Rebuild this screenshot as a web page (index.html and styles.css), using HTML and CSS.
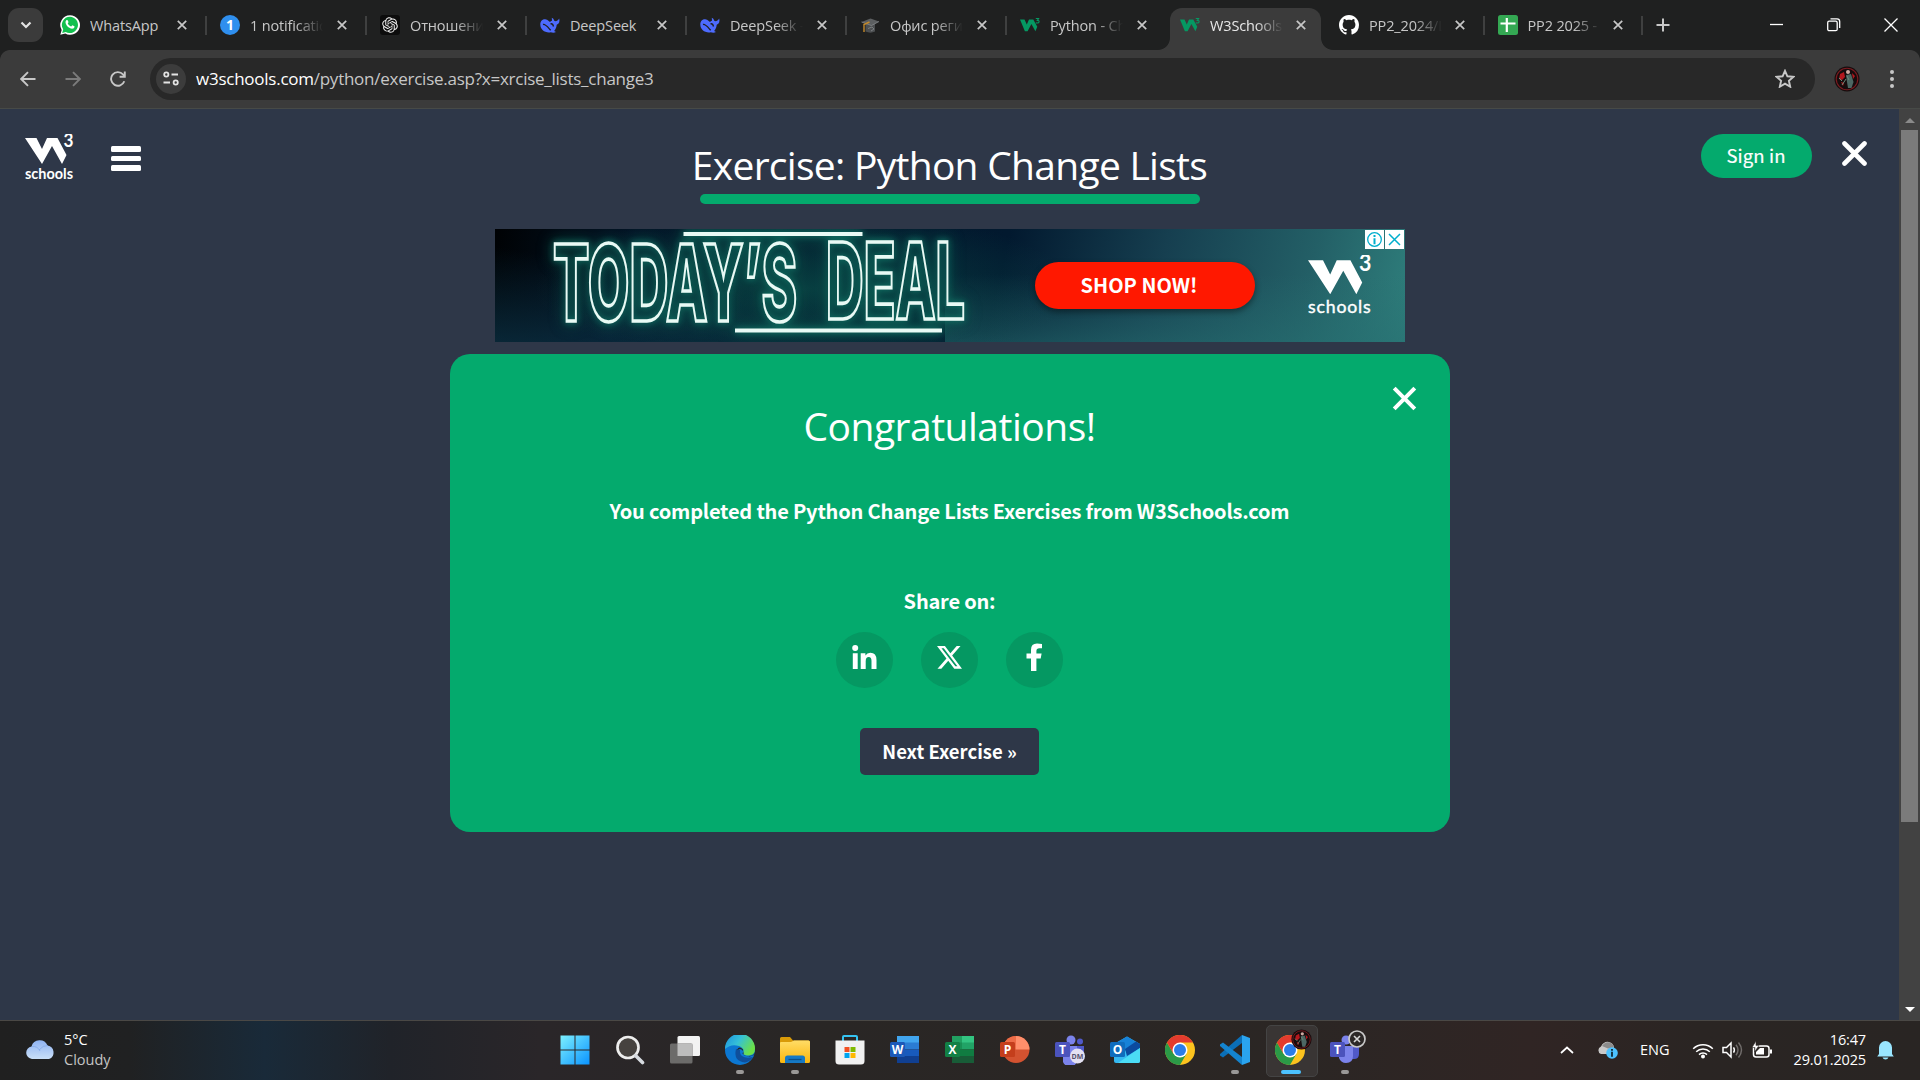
FILE: index.html
```html
<!DOCTYPE html>
<html lang="en">
<head>
<meta charset="utf-8">
<title>W3Schools Python Exercise</title>
<link rel="stylesheet" href="styles.css">
</head>
<body>
<svg class="defs" width="0" height="0">
  <defs>
    <symbol id="close" viewBox="0 0 10 10"><path d="M.8.8l8.4 8.4M9.2.8L.8 9.2" fill="none" stroke="currentColor" stroke-width="1.7"/></symbol>
    <symbol id="w3" viewBox="0 0 48 30"><path d="M0 4h11.500l5.500 11 5-11h10.500l9 17-4.500 9-10-18-10 18z" fill="currentColor"/></symbol>
    <symbol id="w3tab" viewBox="0 0 20 20"><path d="M0 4.500h4.500l2.300 5L9 4.500h4.300l4 7.300-1.900 4.400-4-7.200-3.800 7.200H4.900z" fill="#059862"/><path d="M15.800 3.500h2.800l-1.300 1.900q1.900 0 1.800 1.500-.3 1.500-3.300 1" fill="none" stroke="#059862" stroke-width="1.100"/></symbol>
    <symbol id="whale" viewBox="0 0 20 20"><path d="M.3 9.500C.3 5.600 3.300 3.700 6 4.400c1.500.3 2.700 1.200 4 2.600.7-.8 1.400-1.200 2-1.200l-.2-3c1.200.3 2 1.600 2.500 3 1.500.9 3.300.2 4.900-2.300.7 2.800.1 5.500-2.500 6.300-.2 2.700-1.200 4.700-2.600 6.100l1.900 1.100c-1.700.9-3.500.8-5.200.3C5.200 18.400.3 14.600.3 9.500z" fill="#4d6bfe"/><path d="M3 9.500c2.500-.7 5.500 3.500 7.700 5.800M10.500 8.800q2.300-.5 3 2.700" fill="none" stroke="#1f2020" stroke-width="1.300"/></symbol>
    <symbol id="chrome" viewBox="0 0 30 30"><circle cx="15" cy="15" r="15" fill="#fcc31e"/><path d="M15 15L8.500 18.800 2 7.500A15 15 0 0 0 15 30l6.500-11.300z" fill="#2b9a47"/><path d="M2 7.500A15 15 0 0 1 28 7.500H15L8.500 18.700z" fill="#e33b2e"/><circle cx="15" cy="15" r="7.500" fill="#fff"/><circle cx="15" cy="15" r="6" fill="#2b7de9"/></symbol>
    <symbol id="avatar" viewBox="0 0 26 26"><circle cx="13" cy="13" r="12.500" fill="#160c0d"/><circle cx="13" cy="13" r="10.800" fill="none" stroke="#7a1b20" stroke-width="1.100"/><path d="M6 8l4-2 1 5-3 3-3-1zM18 7l3 3-2 3zM7 16l3 1-1 3z" fill="#b5181e"/><path d="M12 9l5-1 2.500 8-2 6h-3.500l-1-6z" fill="#4d6763"/><circle cx="14" cy="6" r="2" fill="#d0aaa2"/><path d="M5 12l3 3M8 19l4-6M13 10l2 4" stroke="#6d8a7a"/></symbol>
    <linearGradient id="gWin" x1="0" y1="0" x2="1" y2="1"><stop offset="0" stop-color="#7df0ff"/><stop offset="1" stop-color="#0a93ff"/></linearGradient>
    <linearGradient id="gEdge" x1="0" y1="0" x2="1" y2=".5"><stop offset="0" stop-color="#1b8fe0"/><stop offset=".5" stop-color="#35c1d8"/><stop offset="1" stop-color="#6be048"/></linearGradient>
    <linearGradient id="gFold" x1="0" y1="0" x2="0" y2="1"><stop offset="0" stop-color="#ffdc66"/><stop offset="1" stop-color="#fbb60d"/></linearGradient>
    <linearGradient id="gCloud" x1="0" y1="0" x2="0" y2="1"><stop offset="0" stop-color="#8fb3f2"/><stop offset="1" stop-color="#c9dff8"/></linearGradient>
  </defs>
</svg>

<div class="screen">
  <header class="tabstrip">
    <button class="tab-search"><svg width="12" height="8" viewBox="0 0 12 8"><path d="M1.500 1.500L6 6l4.500-4.500" fill="none" stroke="#e3e3e3" stroke-width="2.200"/></svg></button>
    <div class="tab"><svg class="fav" viewBox="0 0 20 20"><path d="M10 .2a9.700 9.700 0 0 0-8.300 14.700L.3 19.800l5-1.300A9.800 9.800 0 1 0 10 .2z" fill="#fff"/><path d="M10 1.800a8.100 8.100 0 0 0-6.800 12.500l-1 3.600 3.600-1A8.100 8.100 0 1 0 10 1.800z" fill="#12c04e"/><path d="M6.300 5.300c.6-.6 1.300-.5 1.500.1l.7 1.700c.1.600-.8 1-.7 1.400.6 1.300 1.900 2.400 3.300 2.900.5.100.9-1 1.300-1.100l2 1c.5.700-.3 2-1.300 2.300-2 .5-4.700-1-6.200-2.900C5.700 9.100 4.800 7 6.300 5.300z" fill="#fff"/></svg><span class="tab-text">WhatsApp</span><svg class="x"><use href="#close"/></svg></div>
    <div class="tab"><span class="fav badge">1</span><span class="tab-text">1 notification</span><svg class="x"><use href="#close"/></svg></div>
    <div class="tab"><svg class="fav" viewBox="0 0 20 20"><rect width="20" height="20" rx="3" fill="#0c0c0c"/><g transform="translate(2.200 2.200) scale(.65)" fill="#f0f0f0"><path d="M22.280 9.820a5.980 5.980 0 0 0-.51-4.910 6.050 6.050 0 0 0-6.510-2.900A6.070 6.070 0 0 0 4.980 4.180a5.980 5.980 0 0 0-4 2.900 6.050 6.050 0 0 0 .74 7.100 5.980 5.980 0 0 0 .51 4.910 6.050 6.050 0 0 0 6.510 2.900A5.980 5.980 0 0 0 13.260 24a6.060 6.060 0 0 0 5.770-4.210 5.990 5.990 0 0 0 4-2.900 6.060 6.060 0 0 0-.75-7.070zm-9.020 12.610a4.480 4.480 0 0 1-2.880-1.040l.14-.08 4.780-2.760a.79.79 0 0 0 .39-.68v-6.740l2.020 1.170a.07.07 0 0 1 .04.05v5.580a4.500 4.500 0 0 1-4.490 4.500zM3.600 18.300a4.470 4.470 0 0 1-.53-3.010l.14.080 4.780 2.760a.77.77 0 0 0 .78 0l5.840-3.370v2.330a.08.08 0 0 1-.03.06L9.740 19.950a4.500 4.500 0 0 1-6.140-1.650zM2.340 7.900a4.480 4.480 0 0 1 2.370-1.970v5.670a.77.77 0 0 0 .39.680l5.810 3.350-2.020 1.170a.08.08 0 0 1-.07 0l-4.830-2.790A4.500 4.500 0 0 1 2.340 7.900zm16.600 3.860L13.100 8.360 15.120 7.200a.08.08 0 0 1 .07 0l4.830 2.790a4.490 4.490 0 0 1-.68 8.100v-5.680a.79.79 0 0 0-.4-.65zm2.010-3.020l-.14-.09-4.770-2.780a.78.780 0 0 0-.79 0L9.410 9.230V6.900a.07.07 0 0 1 .03-.06l4.830-2.790a4.500 4.500 0 0 1 6.680 4.690zM8.310 12.860l-2.020-1.160a.08.08 0 0 1-.04-.06V6.070a4.500 4.500 0 0 1 7.380-3.450l-.14.08L8.700 5.460a.79.79 0 0 0-.39.680zm1.100-2.370l2.600-1.500 2.610 1.500v3l-2.600 1.500-2.610-1.500z"/></g></svg><span class="tab-text">Отношения</span><svg class="x"><use href="#close"/></svg></div>
    <div class="tab"><svg class="fav"><use href="#whale"/></svg><span class="tab-text">DeepSeek</span><svg class="x"><use href="#close"/></svg></div>
    <div class="tab"><svg class="fav"><use href="#whale"/></svg><span class="tab-text">DeepSeek -</span><svg class="x"><use href="#close"/></svg></div>
    <div class="tab"><svg class="fav" viewBox="0 0 20 20"><path d="M5.500 9v7.500q5 2.300 9.500 0V9z" fill="#4c4f51"/><path d="M1.500 7L10.500 3.500 19 6.500 11.500 10.500z" fill="#5c5f61"/><path d="M1.500 7l10 3.500 7.500-4M8 13.500l4-1.500 2 2-3 2" stroke="#85898b" stroke-width=".8" fill="none"/><path d="M9.500 7L4 9.500v7.500" stroke="#c48a2b" stroke-width="1.400" fill="none"/></svg><span class="tab-text">Офис регис</span><svg class="x"><use href="#close"/></svg></div>
    <div class="tab last"><svg class="fav"><use href="#w3tab"/></svg><span class="tab-text">Python - Ch</span><svg class="x"><use href="#close"/></svg></div>
    <div class="tab active"><svg class="fav"><use href="#w3tab"/></svg><span class="tab-text">W3Schools</span><svg class="x"><use href="#close"/></svg></div>
    <div class="tab short"><svg class="fav" viewBox="0 0 16 16"><path fill="#fff" d="M8 0C3.580 0 0 3.580 0 8c0 3.540 2.290 6.530 5.470 7.590.4.070.55-.17.55-.38 0-.19-.01-.82-.01-1.490-2.010.37-2.530-.49-2.690-.94-.09-.23-.48-.94-.82-1.130-.28-.15-.68-.52-.01-.53.63-.01 1.080.58 1.230.82.72 1.210 1.870.87 2.330.66.070-.52.280-.87.510-1.070-1.780-.2-3.640-.89-3.640-3.950 0-.87.310-1.590.82-2.150-.08-.2-.36-1.020.08-2.120 0 0 .67-.21 2.200.82.640-.18 1.320-.27 2-.27s1.360.09 2 .27c1.530-1.040 2.200-.82 2.200-.82.440 1.100.160 1.920.080 2.120.510.560.820 1.270.820 2.150 0 3.070-1.870 3.750-3.650 3.950.290.250.540.730.540 1.480 0 1.070-.01 1.930-.01 2.200 0 .210.150.460.550.380A8.010 8.010 0 0 0 16 8c0-4.420-3.580-8-8-8z"/></svg><span class="tab-text">PP2_2024/L</span><svg class="x"><use href="#close"/></svg></div>
    <div class="tab short"><svg class="fav" viewBox="0 0 20 20"><rect width="20" height="20" rx="2.500" fill="#34a853"/><path d="M2.500 8.500h15M8.800 3v14" stroke="#fff" stroke-width="2.200"/></svg><span class="tab-text">PP2 2025 - G</span><svg class="x"><use href="#close"/></svg></div>
    <svg class="newtab" viewBox="0 0 14 14"><path d="M7 .5v13M.5 7h13" stroke="#c7c7c7" stroke-width="2"/></svg>
    <div class="winctl">
      <svg width="14" height="14"><path d="M0 6.500h13" stroke="#fff" stroke-width="1.300"/></svg>
      <svg width="14" height="14"><rect x=".7" y="3.200" width="9.500" height="9.500" rx="1.500" fill="none" stroke="#fff" stroke-width="1.300"/><path d="M3.500.8h6.500q2.700 0 2.700 2.700v6.500" fill="none" stroke="#fff" stroke-width="1.300"/></svg>
      <svg width="14" height="14"><path d="M.5.5l13 13M13.500.5l-13 13" stroke="#fff" stroke-width="1.300"/></svg>
    </div>
  </header>

  <div class="toolbar">
    <svg class="nav" viewBox="0 0 16 16"><path d="M15.500 8H1.500M8 1.200L1.200 8 8 14.800" fill="none" stroke="#c7c7c7" stroke-width="1.900"/></svg>
    <svg class="nav" viewBox="0 0 16 16"><path d="M.5 8h14M8 1.200L14.800 8 8 14.800" fill="none" stroke="#7b7b7b" stroke-width="1.900"/></svg>
    <svg class="nav" viewBox="0 0 16 16"><path d="M14.300 10.200A6.800 6.800 0 1 1 13 3.400L14.500 5M14.800.5v5.200H9.600" fill="none" stroke="#c7c7c7" stroke-width="1.900"/></svg>
    <div class="omnibox">
      <span class="site"><svg width="16" height="15" viewBox="0 0 16 15"><g fill="none" stroke="#e3e3e3" stroke-width="1.800"><circle cx="3.300" cy="3.500" r="2.100"/><path d="M8.500 3.500h6.500M.5 11.500h6.500"/><circle cx="12.700" cy="11.500" r="2.100"/></g></svg></span>
      <span class="url"><b>w3schools.com</b>/python/exercise.asp?x=xrcise_lists_change3</span>
      <svg class="star" viewBox="0 0 20 19"><path d="M10 1.800l2.400 5.500 6 .5-4.500 4 1.300 5.900L10 14.600l-5.200 3.100 1.300-5.900-4.500-4 6-.5z" fill="none" stroke="#c7c7c7" stroke-width="1.900"/></svg>
    </div>
    <svg class="profile"><use href="#avatar"/></svg>
    <svg class="dots" viewBox="0 0 4 18"><g fill="#c7c7c7"><circle cx="2" cy="2" r="2"/><circle cx="2" cy="9" r="2"/><circle cx="2" cy="16" r="2"/></g></svg>
  </div>

  <div class="viewport">
    <main class="page">
      <div class="topbar">
        <div class="left">
          <svg class="logo" width="49" height="50" viewBox="0 0 49 50"><use href="#w3" width="48" height="30"/><text x="38.500" y="13" font-size="18" font-weight="700" textLength="10" lengthAdjust="spacingAndGlyphs">3</text><text x="0" y="44.500" font-size="14.500" font-weight="700" textLength="48" lengthAdjust="spacingAndGlyphs">schools</text></svg>
          <div class="burger"><i></i><i></i><i></i></div>
        </div>
        <div class="heading"><h1>Exercise: Python Change Lists</h1><div class="progress"></div></div>
        <div class="right"><button class="signin">Sign in</button><svg class="exit" width="25" height="25" viewBox="0 0 25 25"><path d="M2.500 2.500l20 20M22.500 2.500l-20 20" stroke="#fff" stroke-width="4.600" stroke-linecap="round"/></svg></div>
      </div>

      <div class="ad">
        <svg width="910" height="113" viewBox="0 0 910 113">
          <g class="neon"><path d="M188.500 5h179M240 101.500h207" stroke-width="3.800"/>
          <text x="58" y="92" textLength="244" lengthAdjust="spacingAndGlyphs">TODAY’S</text>
          <text x="331" y="90" textLength="139" lengthAdjust="spacingAndGlyphs">DEAL</text></g>
        </svg>
        <div class="shop">SHOP NOW!</div>
        <svg class="adlogo" width="64" height="64" viewBox="0 0 49 49"><use href="#w3" width="48" height="30"/><text x="39" y="12.500" font-size="17.500" font-weight="700" textLength="9.500" lengthAdjust="spacingAndGlyphs">3</text><text x="0" y="44.300" font-size="13.500" font-weight="400" stroke="#fff" stroke-width=".3" textLength="48">schools</text></svg>
        <div class="adchoice">
          <svg width="19" height="19"><rect width="19" height="19" fill="#fff"/><circle cx="9.500" cy="9.500" r="6.800" fill="none" stroke="#00aecd" stroke-width="1.300"/><path d="M9.500 5v2M9.500 8.200v6" stroke="#00aecd" stroke-width="2"/></svg>
          <svg width="19" height="19"><rect width="19" height="19" fill="#fff"/><path d="M4 4l11 11M15 4L4 15" stroke="#00aecd" stroke-width="1.500"/></svg>
        </div>
      </div>

      <section class="card">
        <svg class="card-x" width="25" height="25" viewBox="0 0 25 25"><path d="M2.200 2.200l20.600 20.600M22.800 2.200L2.200 22.800" stroke="#fff" stroke-width="4"/></svg>
        <h2>Congratulations!</h2>
        <p class="done">You completed the Python Change Lists Exercises from W3Schools.com</p>
        <p class="share">Share on:</p>
        <div class="social">
          <span><svg width="25" height="25" viewBox="0 0 25 25" fill="#fff"><circle cx="3.200" cy="3.100" r="3"/><path d="M.8 8.200h4.900V24H.8zM8.700 8.200h4.700v2.200q1.700-2.600 4.900-2.600 6.200 0 6.200 7.200v9h-5v-7.900q0-4-2.700-4-3.100 0-3.100 4.200V24h-5z"/></svg></span>
          <span><svg width="25" height="23" viewBox="0 0 24 22" ><path fill="#fff" d="M18.900 0h3.680l-8.040 9.190L24 21.700h-7.410l-5.800-7.580L4.150 21.700H.47l8.600-9.830L0 0h7.590l5.250 6.930zM17.600 19.500h2.040L6.490 2.090H4.300z"/></svg></span>
          <span><svg width="17" height="28" viewBox="0 0 17 28"><path fill="#fff" d="M5 28V15.500H.5v-5H5V6.800Q5 .5 11 .5q2.700 0 5 .4v4.300h-2.700q-2.900 0-2.900 2.800v2.500h5.200l-.9 5h-4.300V28z"/></svg></span>
        </div>
        <button class="next">Next Exercise »</button>
      </section>
    </main>
    <div class="scrollbar"><i class="up"></i><i class="thumb"></i><i class="down"></i></div>
  </div>

  <footer class="taskbar">
    <div class="weather">
      <svg width="31" height="21" viewBox="0 0 31 21"><path d="M7 20a6.300 6.300 0 0 1-.5-12.500A8.500 8.500 0 0 1 22.500 6.500 7 7 0 0 1 24 20z" fill="url(#gCloud)"/><path d="M15 12a8 8 0 0 0-8-4.500M14 11q4-5 9-4.500" stroke="#7fa5e8" fill="none" opacity=".7"/></svg>
      <div><div>5°C</div><div class="dim">Cloudy</div></div>
    </div>
    <div class="apps">
      <span><svg viewBox="0 0 30 30"><path d="M.5.500h14v14H.5zM15.500.500h14v14h-14zM.5 15.500h14v14H.5zM15.500 15.500h14v14h-14z" fill="url(#gWin)"/></svg></span>
      <span><svg viewBox="0 0 30 30"><circle cx="13" cy="12.500" r="10.500" fill="#46423f" stroke="#ededed" stroke-width="2.700"/><path d="M20.500 20.500l7 7" stroke="#d7dbe0" stroke-width="3.600" stroke-linecap="round"/></svg></span>
      <span><svg viewBox="0 0 30 30"><rect x="7.500" y="1" width="22.500" height="20" rx="1.500" fill="#f3f3f3"/><rect x="0" y="8.500" width="22.500" height="20" rx="1.500" fill="#6c6b6a"/><path d="M7.500 8.500h15V21h-15z" fill="#bdbdbd"/></svg></span>
      <span class="run"><svg viewBox="0 0 30 30"><circle cx="15" cy="15" r="15" fill="#0c77d2"/><path d="M0 13.500A15 15 0 0 1 30 14q0 6.500-7 6.500-5.500 0-4.500-3 1-4.500-4.500-6.500Q6 8.500 0 14z" fill="url(#gEdge)"/><path d="M11 14q-3 12 9 13.500 5-1 8-5.500-7 2-11-1-2.500-2-2-6z" fill="#0f4f9c"/><path d="M12 15q2-4.500 6-.5.500 2-.5 4 2 3 7 3l5-1.500V17l-1 3q-3 1.500-7 1-3.500-.5-3-2.500 0-4-3.500-4.500z" fill="#252424"/></svg></span>
      <span class="run"><svg viewBox="0 0 30 30"><path d="M0 3.500Q0 2 1.500 2H10l3 3.500h15.500Q30 5.500 30 7v5H0z" fill="#d99a08"/><path d="M0 8q0-1 1-1h10l3-1.500h14.500Q30 5.500 30 7v19.500Q30 28 28.500 28h-27Q0 28 0 26.500z" fill="url(#gFold)"/><path d="M5 28v-5q0-2.500 2.500-2.500h15Q25 20.500 25 23v5z" fill="#1679c5"/><path d="M8.500 24.500h13" stroke="#0c4f8a" stroke-width="1.300"/></svg></span>
      <span><svg viewBox="0 0 30 30"><path d="M8 7V2q0-1 1-1h12q1 0 1 1v5" fill="none" stroke="#35c3f2" stroke-width="2"/><path d="M.5 5.500h29V26q0 3.500-3.500 3.500H4Q.5 29.500.5 26z" fill="#f1f1f1"/><path d="M9.500 12h5v5h-5z" fill="#f25022"/><path d="M15.500 12h5v5h-5z" fill="#7fba00"/><path d="M9.500 18h5v5h-5z" fill="#00a4ef"/><path d="M15.500 18h5v5h-5z" fill="#ffb900"/></svg></span>
      <span><svg viewBox="0 0 30 30"><path d="M7 1h22v7H7z" fill="#41a5ee"/><path d="M7 7.500h22v7H7z" fill="#2b7cd3"/><path d="M7 14.500h22v7H7z" fill="#185abd"/><path d="M7 21h22v7H7z" fill="#103f91"/><rect y="7" width="15" height="15" rx="1.500" fill="#1c59b8"/><text x="7.500" y="18.500">W</text></svg></span>
      <span><svg viewBox="0 0 30 30"><path d="M7 1h22v7H7z" fill="#33c481"/><path d="M7 7.500h22v7H7z" fill="#21a366"/><path d="M7 14.500h22v7H7z" fill="#107c41"/><path d="M7 21h22v7H7z" fill="#185c37"/><path d="M7 1h10v20H7z" fill="#107c41" opacity=".5"/><rect y="7" width="15" height="15" rx="1.500" fill="#128045"/><text x="7.500" y="18.500">X</text></svg></span>
      <span><svg viewBox="0 0 30 30"><circle cx="16" cy="14.500" r="13.500" fill="#d35230"/><path d="M16 14.500V1a13.500 13.500 0 0 1 13.500 13.500z" fill="#ff8f6b"/><path d="M16 1A13.500 13.500 0 0 0 2.500 14.500H16z" fill="#ed6c47"/><rect y="7" width="15" height="15" rx="1.500" fill="#c43e1c"/><text x="7.500" y="18.500">P</text></svg></span>
      <span><svg viewBox="0 0 30 30"><circle cx="16" cy="5" r="4.500" fill="#7b83eb"/><circle cx="25" cy="6.500" r="3" fill="#5059c9"/><path d="M20 11h9v11h-9z" fill="#5059c9"/><path d="M8 11h14v10a7 7 0 0 1-14 6z" fill="#7b83eb"/><rect y="7" width="15" height="15" rx="1.500" fill="#4b53bc"/><text x="7.500" y="18.500">T</text><circle cx="22.500" cy="21" r="7.500" fill="#e4e1f2"/><text class="dm" x="22.500" y="23.500">DM</text></svg></span>
      <span><svg viewBox="0 0 30 30"><path d="M4 9L17 1.500 30 9v17q0 2-2 2H6q-2 0-2-2z" fill="#35b8f1"/><path d="M4 9L17 1.500 27 7.500 12 18H4z" fill="#1782d8"/><path d="M15 14l11-7.500L30 9v4L17 21z" fill="#0b4a9f"/><path d="M30 13v13q0 2-2 2H8z" fill="#4bdcf5"/><rect y="7" width="15" height="15" rx="1.500" fill="#0f6cbd"/><text x="7.500" y="18.500">O</text></svg></span>
      <span><svg><use href="#chrome"/></svg></span>
      <span class="run"><svg viewBox="0 0 30 30"><path d="M22 0v8L3 22.500 0 20.500v-1.500z" fill="#0b6fb8"/><path d="M0 9.500L3 7.500 22 22v8L0 11z" fill="#1484cf"/><path d="M22 0l8 3v24l-8 3z" fill="#2aa4ef"/></svg></span>
      <span class="run on"><svg viewBox="0 0 30 30"><use href="#chrome"/></svg><svg class="mini"><use href="#avatar"/></svg></span>
      <span class="run"><svg viewBox="0 0 30 30"><circle cx="16" cy="5" r="4.500" fill="#7b83eb"/><path d="M20 11h9v8q0 5-5 5h-4z" fill="#5059c9"/><path d="M9 11h14v10q0 7-7 7-5 0-7-5z" fill="#7b83eb"/><rect y="7" width="15" height="15" rx="1.500" fill="#4b53bc"/><text x="7.500" y="18.500">T</text></svg><svg class="status" viewBox="0 0 18 18"><circle cx="9" cy="9" r="8" fill="#2c2827" stroke="#c9c9c9" stroke-width="1.700"/><path d="M6 6l6 6M12 6l-6 6" stroke="#d8d8d8" stroke-width="1.600"/></svg></span>
    </div>
    <div class="tray">
      <svg class="chev" width="14" height="8"><path d="M1 7l6-5.500L13 7" fill="none" stroke="#fff" stroke-width="1.700"/></svg>
      <svg class="onedrive" width="21" height="18"><path d="M4 13A4 4 0 0 1 4 5.500Q7 0 12 1q4 1 5 5v7z" fill="#c9c9c9"/><path d="M5 5Q8 0 13 1.500q3 1.500 4 5l-6 1z" fill="#8b8b8b"/><circle cx="15" cy="12" r="5.800" fill="#4cc2ff"/><path d="M15 8v1.800M15 10.800v5" stroke="#12303f" stroke-width="1.900"/></svg>
      <span class="lang">ENG</span>
      <svg class="wifi" width="22" height="17" viewBox="0 0 22 17"><g fill="none" stroke="#fff" stroke-width="1.500"><path d="M1.200 6.800a14 14 0 0 1 19.600 0M4.200 9.800a9.700 9.700 0 0 1 13.600 0M7 12.600a5.700 5.700 0 0 1 8 0"/></g><circle cx="11" cy="14.500" r="2" fill="#fff"/></svg>
      <svg class="sound" width="21" height="18" viewBox="0 0 21 18"><path d="M1 6.500h3.500L9 2v14l-4.500-4.500H1z" fill="none" stroke="#fff" stroke-width="1.500"/><path d="M11.500 6.300q1.800 2.700 0 5.400" fill="none" stroke="#fff" stroke-width="1.400"/><path d="M14 3.800q4 5.200 0 10.400M16.500 1.500q6 7.500 0 15" fill="none" stroke="#716d6b" stroke-width="1.400"/></svg>
      <svg class="batt" width="21" height="18" viewBox="0 0 21 18"><rect x="1.500" y="5" width="15.500" height="11" rx="2.500" fill="none" stroke="#fff" stroke-width="1.500"/><path d="M18 8.500v4h2v-4zM4 11l4-4h4v6.500H4z" fill="#fff"/><path d="M4 0L0 6.500h3L2.500 11 7 4.500H4z" fill="#fff" stroke="#2b2625" stroke-width=".6"/></svg>
      <div class="clock"><div>16:47</div><div>29.01.2025</div></div>
      <svg class="bell" width="17" height="20" viewBox="0 0 17 20"><path d="M2 14V7.500a6.500 6.500 0 0 1 13 0V14l1.800 2.500H.2zM5.500 17.500h6q-.8 2-3 2t-3-2z" fill="#9ae6ff"/></svg>
    </div>
  </footer>
</div>
</body>
</html>
```
FILE: styles.css
```css
* { box-sizing: border-box; }
body { margin: 0; background: #2e3748; font-family: "Open Sans", "Noto Sans", sans-serif; color: #fff; }
button { border: 0; padding: 0; color: inherit; font: inherit; }
h1, h2, p { margin: 0; font-weight: 400; }
svg { display: block; flex: none; }
.defs { position: absolute; }
.screen { width: 1920px; height: 1080px; display: flex; flex-direction: column; overflow: hidden; }

/* Tab strip */
.tabstrip { height: 50px; flex: none; display: flex; background: #1f2020; padding-left: 8px; }
.tab-search { width: 35px; height: 34px; margin: 8px 4px 0 0; border-radius: 11px; background: #3b3b3b; display: grid; place-items: center; }
.tab { width: 160px; height: 50px; padding: 0 20px 0 13px; display: flex; align-items: center; position: relative; }
.tab.short { width: 158.500px; }
.tab::after { content: ""; position: absolute; right: 0; top: 16px; width: 2px; height: 19px; background: #3f4040; }
.tab.last::after { display: none; }
.tab.active { width: 159px; }
.tab.active::before { content: ""; position: absolute; left: 3px; right: 5px; top: 8px; bottom: 0; border-radius: 12px 12px 0 0; background: #3b3b3b; }
.tab.active > * { position: relative; }
/* outward curves at the foot of the active tab */
.tab.active::after { left: -9px; right: -7px; top: auto; bottom: 0; width: auto; height: 12px; background: radial-gradient(circle at 0 0, transparent 11.500px, #3b3b3b 12.300px) left / 12px 12px no-repeat, radial-gradient(circle at 100% 0, transparent 11.500px, #3b3b3b 12.300px) right / 12px 12px no-repeat; }
.fav { width: 20px; height: 20px; flex: none; margin-right: 10px; }
.badge { border-radius: 50%; background: #2f8fee; font: 700 14px/20px "Noto Sans", sans-serif; text-align: center; }
.tab-text { flex: none; width: 73px; height: 24px; margin-top: 1px; font-size: 14.500px; line-height: 24px; letter-spacing: -.15px; color: #c7c7c7; white-space: nowrap; overflow: hidden; -webkit-mask-image: linear-gradient(90deg, #000 62%, transparent 100%); mask-image: linear-gradient(90deg, #000 62%, transparent 100%); }
.tab:nth-child(2) .tab-text, .tab:nth-child(5) .tab-text { -webkit-mask-image: none; mask-image: none; }
.tab.active .tab-text { color: #e8e8e8; }
.x { width: 10px; height: 10px; margin-left: auto; color: #c7c7c7; }
.newtab { width: 14px; height: 14px; margin: 18px 0 0 13px; }
.winctl { margin: 18px 22px 0 auto; display: flex; gap: 43px; }

/* Toolbar */
.toolbar { height: 59px; flex: none; display: flex; align-items: center; padding: 0 26px 1px 20px; background: radial-gradient(circle at 10px 10px, transparent 9.500px, #1f2020 10.300px) 0 0 / 10px 10px no-repeat, radial-gradient(circle at 0 10px, transparent 9.500px, #1f2020 10.300px) 100% 0 / 10px 10px no-repeat, #3b3b3b; border-bottom: 1px solid #474a47; }
.nav { width: 16px; height: 16px; margin-right: 29px; }
.omnibox { width: 1665px; height: 42px; margin-left: -5px; border-radius: 21px; background: #282828; display: flex; align-items: center; padding: 0 20px 0 6px; }
.site { width: 30px; height: 30px; border-radius: 50%; background: #3c3c3c; display: grid; place-items: center; margin-right: 10px; }
.url { font-size: 17px; line-height: 26px; letter-spacing: -.25px; margin-top: 1px; color: #c7c7c7; white-space: nowrap; }
.url b { font-weight: 400; color: #fff; }
.star { width: 20px; height: 19px; margin-left: auto; }
.profile { width: 26px; height: 26px; margin-left: 19px; }
.dots { width: 4px; height: 18px; margin-left: auto; }

/* Page */
.viewport { flex: 1; display: flex; min-height: 0; }
.page { flex: 1; display: flex; flex-direction: column; align-items: center; }
.topbar { width: 100%; height: 120px; flex: none; display: grid; grid-template-columns: 1fr 1000px 1fr; }
.left { display: flex; padding: 25px 0 0 25px; }
.logo text, .adlogo text { fill: #fff; font-family: Lato, sans-serif; }
.burger { display: flex; flex-direction: column; gap: 4px; margin: 12px 0 0 36.500px; }
.burger i { width: 30px; height: 5.600px; border-radius: 1.500px; background: #fff; }
.heading { display: flex; flex-direction: column; align-items: center; }
h1, h2 { font-size: 39px; line-height: 54px; letter-spacing: -.5px; white-space: nowrap; }
h1 { margin-top: 29px; letter-spacing: -.72px; }
.progress { width: 500px; height: 10px; margin-top: 2px; border-radius: 5px; background: #04aa6d; }
.right { display: flex; justify-content: flex-end; padding: 25px 32.500px 0 0; }
.signin { width: 111px; height: 44px; border-radius: 22px; background: #04aa6d; font: 400 18.500px/42px "Noto Sans CJK SC", sans-serif; letter-spacing: .1px; padding-bottom: 2px; -webkit-text-stroke: .2px #fff; }
.exit { margin: 7px 0 0 30px; }

.ad { position: relative; width: 910px; height: 113px; flex: none; background: radial-gradient(ellipse 270px 80px at 310px 60px, rgba(12,90,80,.6), transparent), linear-gradient(to top, rgba(38,110,112,.55), transparent 60%) 450px 0 / 460px 113px no-repeat, linear-gradient(10deg, rgba(12,52,72,.7), transparent 35%), linear-gradient(104deg, #000204 0%, #031426 15%, #02192f 55%, #163f50 72%, #235f66 88%, #2f7f7c 100%); }
.neon { fill: none; stroke: #e9faf5; filter: drop-shadow(0 0 3px #14806e) drop-shadow(0 0 7px #0b5f53); }
.neon text { font: 800 106px Inter, "Liberation Sans Narrow", sans-serif; stroke-width: 3.700px; }
.shop { position: absolute; left: 540px; top: 33px; width: 220px; height: 47px; border-radius: 24px; background: #ff1800; box-shadow: 0 3px 6px rgba(0,0,0,.4); text-align: center; padding-right: 11px; font: 700 20px/46px "Noto Sans CJK SC", sans-serif; }
.adlogo { position: absolute; left: 813px; top: 26px; }
.adchoice { position: absolute; right: 1px; top: 1px; display: flex; gap: 1px; }

.card { position: relative; width: 1000px; height: 478px; flex: none; margin-top: 12px; border-radius: 20px; background: #04aa6d; display: flex; flex-direction: column; align-items: center; font-family: "Noto Sans CJK SC", sans-serif; font-weight: 700; }
.card-x { position: absolute; right: 33px; top: 31.500px; }
h2 { margin-top: 45px; font-family: "Open Sans", sans-serif; }
.done { font-weight: 700; font-size: 20px; line-height: 30px; letter-spacing: -.2px; margin-top: 43px; white-space: nowrap; }
.share { font-weight: 700; font-size: 20px; line-height: 30px; letter-spacing: -.2px; margin-top: 60px; }
.social { display: flex; gap: 28px; margin-top: 16px; }
.social span { width: 57px; height: 56px; border-radius: 50%; background: #059862; display: grid; place-items: center; padding-bottom: 6px; }
.next { width: 179px; height: 47px; margin-top: 40px; border-radius: 5px; background: #2e3748; font-size: 18.500px; line-height: 45px; white-space: nowrap; }

.scrollbar { width: 21px; background: #424242; display: flex; flex-direction: column; align-items: center; }
.up { margin-top: 9px; border: 5px solid transparent; border-top: 0; border-bottom: 5px solid #8a8a8a; }
.thumb { width: 17px; height: 692px; margin-top: 7px; background: #7b7b7b; }
.down { margin: auto 0 8px; border: 5px solid transparent; border-bottom: 0; border-top: 5px solid #fff; }

/* Taskbar */
.taskbar { height: 60px; flex: none; display: flex; align-items: center; border-top: 1px solid #4a4845; font-size: 14.500px; line-height: 20px; background: linear-gradient(90deg, #202020 0, #202122 130px, #192a39 265px, #202329 390px, #2a2629 540px, #292625 800px, #2b2624 1300px, #302524 1530px, #2a2523 1700px, #292523 100%); }
.weather { width: 547px; display: flex; align-items: center; gap: 8px; padding: 0 0 2px 25px; }
.dim { color: #c5c5c5; }
.apps { display: flex; }
.apps span { position: relative; width: 55.070px; height: 59px; display: grid; place-items: center; padding-bottom: 1px; }
.apps span > svg { width: 30px; height: 30px; position: relative; }
.apps text { fill: #fff; font: 700 12px "Open Sans", sans-serif; text-anchor: middle; }
.apps .dm { fill: #55506e; font-size: 7px; }
.run::after { content: ""; position: absolute; left: 23.500px; top: 49px; width: 8px; height: 4px; border-radius: 2px; background: #9a9897; }
.on::before { content: ""; position: absolute; left: 3px; top: 4px; width: 50px; height: 50px; border-radius: 5px; background: #393534; border: 1px solid #444; }
.run.on::after { left: 18px; width: 20px; background: #4cc2ff; }
.apps span > .mini { position: absolute; left: 28.500px; top: 8px; width: 21px; height: 21px; }
.apps span > .status { position: absolute; left: 30px; top: 9px; width: 18px; height: 18px; }
.tray { flex: 1; display: flex; align-items: center; justify-content: flex-end; padding: 0 26px 1px 0; }
.onedrive { margin-left: 23px; }
.lang { width: 30px; margin: 0 22px; }
.sound { margin-left: 8px; }
.batt { margin-left: 9px; }
.clock { width: 84px; text-align: right; letter-spacing: -.15px; margin: 0 11px 0 9px; white-space: nowrap; }
```
